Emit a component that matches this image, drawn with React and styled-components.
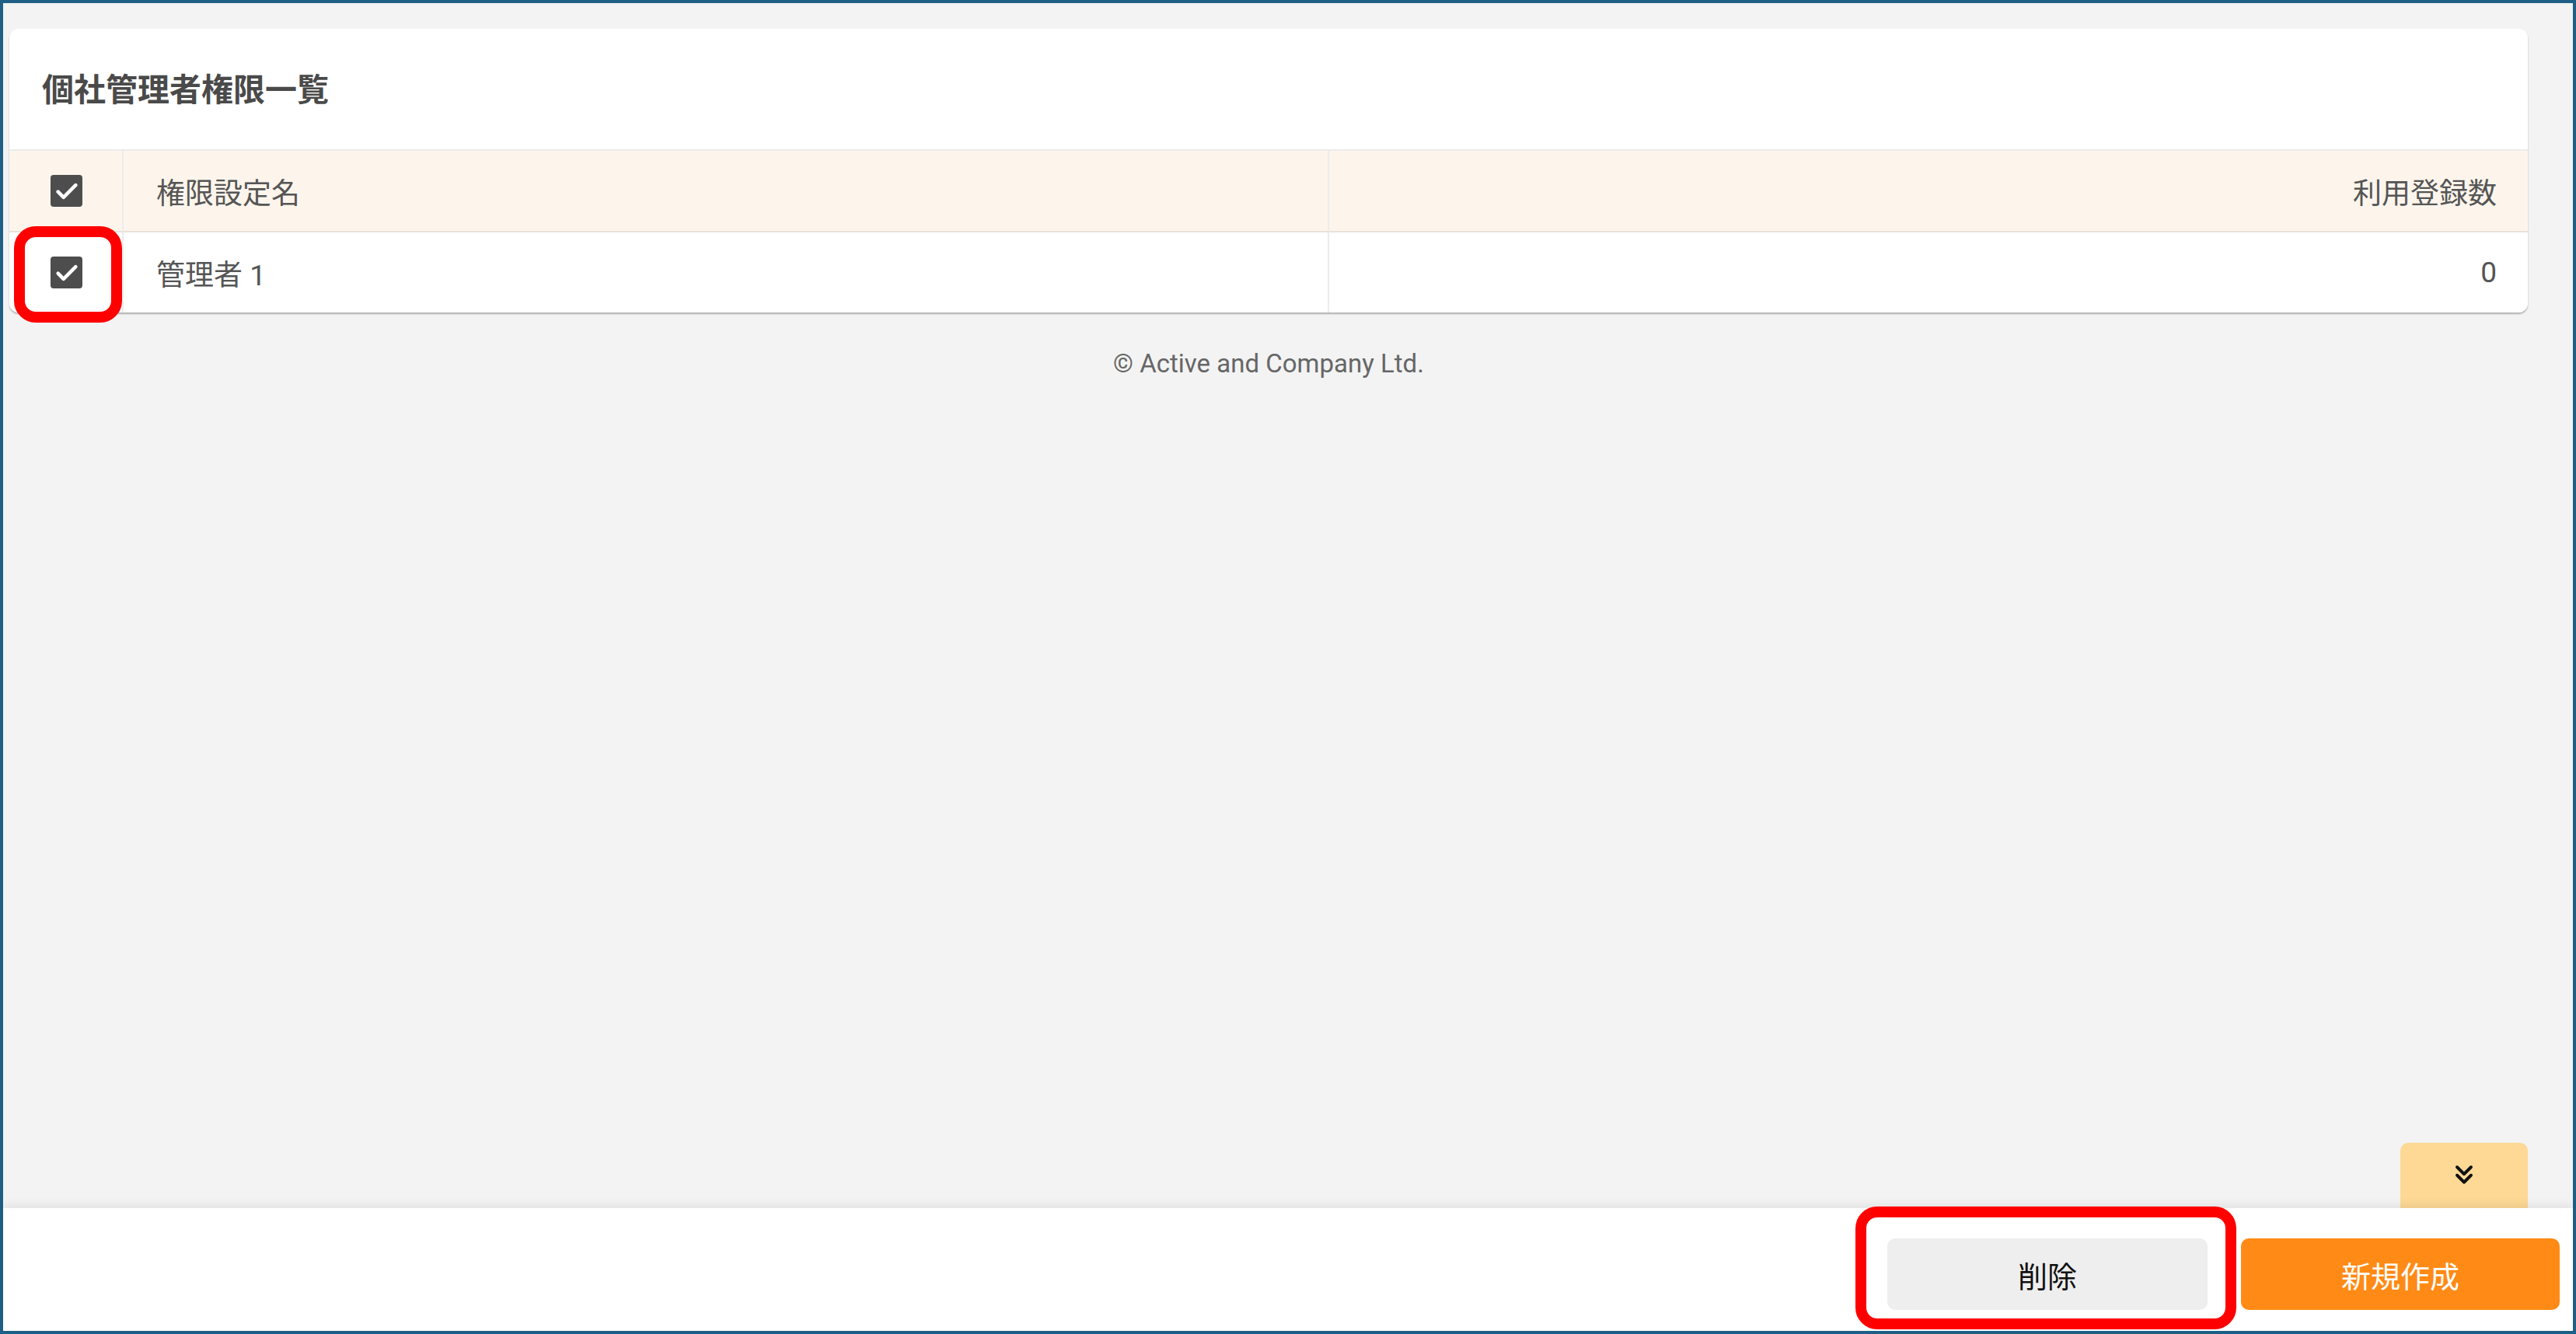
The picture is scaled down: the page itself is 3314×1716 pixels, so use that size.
import styled, { createGlobalStyle } from 'styled-components';

const GlobalStyle = createGlobalStyle`
    html, body {
        margin: 0;
        padding: 0;
        background: #f3f3f3;
    }
    * {
        box-sizing: border-box;
    }
`

const Frame = styled.div`
    position: relative;
    width: 3314px;
    height: 1716px;
    border: 4px solid #1f5f86;
    display: flex;
    flex-direction: column;
    background: #f3f3f3;
    font-family: Roboto, "Noto Sans CJK JP", sans-serif;
`

const Main = styled.div`
    position: relative;
    flex: 1;
    padding: 33px 58px 0 8px;
`

const Card = styled.div`
    background: #fff;
    border-radius: 12px;
    box-shadow: 0 2px 2px rgba(0, 0, 0, 0.28);
    overflow: hidden;
`

const CardTitle = styled.h2`
    margin: 0;
    height: 155px;
    display: flex;
    align-items: center;
    padding: 0 0 6px 42px;
    font-family: "Noto Sans CJK JP", sans-serif;
    font-size: 41px;
    font-weight: 700;
    color: #4a4a4a;
`

const Table = styled.div`
    display: grid;
    grid-template-columns: 145px 1551px 1fr;
`

const Cell = styled.div`
    position: relative;
    height: 105px;
    display: flex;
    align-items: center;
    justify-content: ${p => (p.$align === 'right' ? 'flex-end' : p.$align === 'center' ? 'center' : 'flex-start')};
    padding: 0 40px 0 42px;
    background: ${p => (p.$head ? '#fdf5ec' : '#fff')};
    border-top: 2px solid ${p => (p.$head ? '#ebebeb' : '#e9e1dc')};
    border-left: ${p => (p.$first ? 'none' : '2px solid #ececec')};
    font-family: Roboto, "Noto Sans CJK JP", sans-serif;
    font-size: 37px;
    color: #555;
`

const CheckBox = styled.span`
    width: 41px;
    height: 41px;
    border-radius: 4px;
    background: #4d4d4d;
    display: flex;
    align-items: center;
    justify-content: center;
`

const Highlight = styled.div`
    position: absolute;
    border: 14px solid #ff0000;
    border-radius: 28px;
    pointer-events: none;
    z-index: 5;
`

const Copyright = styled.p`
    margin: 46px 0 0;
    text-align: center;
    font-family: Roboto, sans-serif;
    font-size: 33px;
    color: #666;
`

const ScrollButton = styled.button`
    position: absolute;
    right: 58px;
    bottom: 0;
    width: 164px;
    height: 84px;
    border: none;
    border-radius: 10px 10px 0 0;
    background: #fdd995;
    display: flex;
    align-items: center;
    justify-content: center;
    padding: 0 0 2px;
`

const Footer = styled.div`
    position: relative;
    height: 158px;
    background: #fff;
    box-shadow: 0 -6px 10px rgba(0, 0, 0, 0.06);
    display: flex;
    align-items: center;
    justify-content: flex-end;
    gap: 43px;
    padding: 12px 17px 0 0;
`

const ActionButton = styled.button`
    width: ${p => p.$width}px;
    height: 92px;
    border: none;
    border-radius: 10px;
    background: ${p => (p.$primary ? '#ff8a15' : '#eeeeee')};
    color: ${p => (p.$primary ? '#fff' : '#111')};
    font-family: "Noto Sans CJK JP", sans-serif;
    font-size: 38px;
    cursor: pointer;
`

const Check = () => (
    <CheckBox>
        <svg width="34" height="34" viewBox="0 0 24 24" fill="none">
            <path d="M4 12.5l5 5L20 6.5" stroke="#fff" strokeWidth="3.2" strokeLinecap="round" strokeLinejoin="round" />
        </svg>
    </CheckBox>
)

const App = () => {
    return (
        <Frame>
            <GlobalStyle />
            <Main>
                <Card>
                    <CardTitle>個社管理者権限一覧</CardTitle>
                    <Table>
                        <Cell $head $first $align="center"><Check /></Cell>
                        <Cell $head>権限設定名</Cell>
                        <Cell $head $align="right">利用登録数</Cell>
                        <Cell $first $align="center"><Check /></Cell>
                        <Cell>管理者 1</Cell>
                        <Cell $align="right">0</Cell>
                    </Table>
                </Card>
                <Copyright>© Active and Company Ltd.</Copyright>
                <Highlight style={{ left: 14, top: 287, width: 139, height: 124 }} />
                <ScrollButton>
                    <svg width="36" height="36" viewBox="0 0 24 24" fill="none">
                        <path d="M6 5.5l6 6 6-6M6 12.5l6 6 6-6" stroke="#111" strokeWidth="2.6" strokeLinecap="round" strokeLinejoin="round" />
                    </svg>
                </ScrollButton>
            </Main>
            <Footer>
                <ActionButton $width={412}>削除</ActionButton>
                <ActionButton $width={410} $primary>新規作成</ActionButton>
                <Highlight style={{ left: 2383, top: -2, width: 490, height: 158 }} />
            </Footer>
        </Frame>
    )
}

export default App;
